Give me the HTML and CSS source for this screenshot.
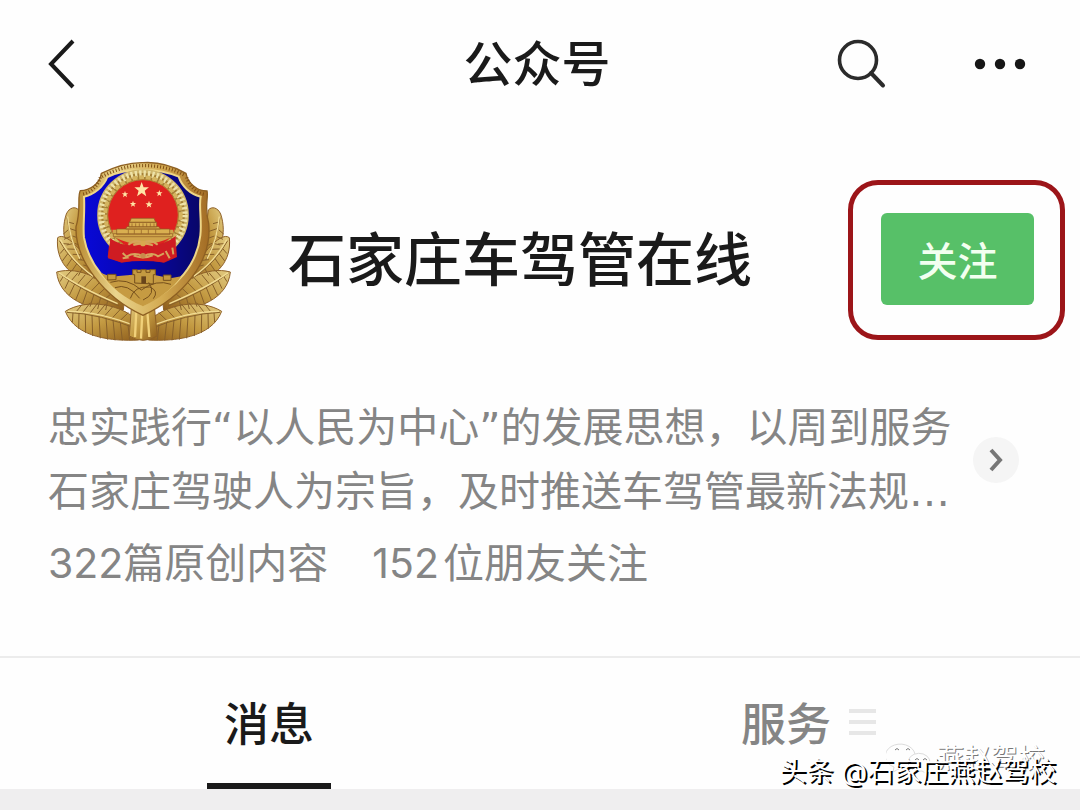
FILE: index.html
```html
<!DOCTYPE html>
<html lang="zh-CN">
<head>
<meta charset="utf-8">
<meta name="viewport" content="width=device-width, initial-scale=1">
<title>公众号</title>
<link rel="stylesheet" href="styles.css">
</head>
<body>
<header class="topbar">
  <button class="icon-btn back" type="button" aria-label="返回">
    <svg width="28" height="50" viewBox="0 0 28 50"><path d="M25 2 3 25 25 48" fill="none" stroke="#1a1a1a" stroke-width="4"/></svg>
  </button>
  <h1 class="topbar-title">公众号</h1>
  <div class="topbar-actions">
    <button class="icon-btn" type="button" aria-label="搜索">
      <svg width="50" height="50" viewBox="0 0 50 50" fill="none" stroke="#2b2b2b"><circle cx="21" cy="21" r="18.5" stroke-width="3.6"/><path d="M34 34 46 46.500" stroke-width="4" stroke-linecap="round"/></svg>
    </button>
    <button class="icon-btn" type="button" aria-label="更多">
      <svg width="52" height="12" viewBox="0 0 52 12" fill="#161616"><circle cx="6" cy="6" r="5.200"/><circle cx="26" cy="6" r="5.200"/><circle cx="46" cy="6" r="5.200"/></svg>
    </button>
  </div>
</header>

<main>
  <section class="profile">
    <svg class="avatar" viewBox="0 0 630 600" role="img" aria-label="警徽">
      <defs>
        <linearGradient id="gold" x1="0" y1="0" x2="1" y2="1">
          <stop offset="0" stop-color="#e3cc82"/><stop offset=".5" stop-color="#c39a42"/><stop offset="1" stop-color="#8d5c1b"/>
        </linearGradient>
        <linearGradient id="rim" x1="0" y1="0" x2="1" y2="0">
          <stop offset="0" stop-color="#b98b32"/><stop offset=".3" stop-color="#ead58d"/><stop offset=".65" stop-color="#d3aa51"/><stop offset="1" stop-color="#a26b24"/>
        </linearGradient>
        <linearGradient id="blue" x1="0" y1="0" x2="1" y2="0">
          <stop offset="0" stop-color="#0808d8"/><stop offset=".55" stop-color="#0806a5"/><stop offset="1" stop-color="#080667"/>
        </linearGradient>
        <path id="star" d="M0-20 5-6 19-6 8 3 12 17 0 9-12 17-8 3-19-6-5-6z"/>
        <g id="leaves">
          <path d="M122 345C82 310 58 255 79 192 88 172 106 168 116 180L132 315z"/>
          <path d="M162 398C88 382 46 332 53 263 80 240 152 330 176 388z"/>
          <path d="M250 480C143 486 57 443 50 366 119 347 204 390 252 462z"/>
          <path d="M296 570C221 574 107 565 76 484 139 445 245 459 302 520z"/>
          <g fill="none" stroke="#87602a" stroke-width="3">
            <path d="M81 202Q92 278 124 330M84 240 70 252M90 260 72 268M98 281 80 285M84 216 102 221M90 236 114 244M98 258 125 268M105 280 130 292"/>
            <path d="M58 272Q94 338 164 386M73 296 60 311M84 310 67 333M97 324 80 349M112 339 95 364M128 353 115 377M68 281 87 282M82 297 110 298M98 313 128 314M114 329 145 332M130 345 160 353"/>
            <path d="M55 369Q120 420 237 468M70 379 60 395M87 390 75 416M105 400 88 436M123 411 107 450M142 422 128 461M162 433 150 470M182 442 173 477M203 452 197 480M76 382 93 363M94 392 114 368M113 402 136 374M132 413 158 384M153 424 180 396M174 435 200 410M196 446 220 426"/>
            <path d="M81 487Q180 491 297 539M99 488 97 517M117 490 116 536M136 492 137 549M156 495 158 558M177 499 181 565M198 504 203 569M219 510 225 571M241 517 247 571M264 525 269 570M107 487 127 463M127 489 151 458M149 491 174 458M170 495 197 462M192 500 220 468M215 506 243 476M238 514 265 488"/>
          </g>
          <g fill="none" stroke="#f1dc94" stroke-width="4">
            <path d="M83 200Q91 277 120 326M61 269Q94 332 160 379M56 368Q120 413 233 461M84 484Q182 485 294 531"/>
          </g>
        </g>
      </defs>
      <g fill="url(#gold)" stroke="#8f6128" stroke-width="3" stroke-linejoin="round">
        <use href="#leaves"/>
        <use href="#leaves" transform="matrix(-1 0 0 1 621 0)"/>
        <path d="M275 460 268 558Q309 584 352 558L342 460z"/>
      </g>
      <path d="M289 480 285 561M307 485 303 566M322 485 328 561" stroke="#f1d17a" stroke-width="7" fill="none"/>
      <path d="M309 38C270 37 225 50 184 70 180 100 150 122 121 122 111 138 124 180 108 230 104 330 193 443 309 496 425 442 518 338 506 220 492 173 506 142 501 123 470 123 443 98 438 70 399 48 353 35 309 38z" fill="url(#rim)" stroke="#8e6022" stroke-width="4"/>
      <path d="M309 60C272 59 235 65 202 81 191 111 159 136 132 140 135 190 128 229 132 263 144 332 197 417 309 465 414 415 472 340 481 256 486 214 476 166 482 140 450 132 425 108 416 80 378 64 344 59 309 60z" fill="url(#blue)" stroke="#eed687" stroke-width="6"/>
      <path d="M186 80C225 58 270 46 309 47 355 46 402 57 434 76M181 82C175 109 148 130 124 133M440 82C448 110 470 129 496 133" fill="none" stroke="#805016" stroke-width="10" stroke-dasharray="3 6"/>
      <path d="M181 367Q207 383 236 378L278 374 278 359H347V376L391 385 424 379C397 418 354 449 309 469 255 446 211 411 181 367z" fill="#c69b42"/>
      <g fill="#c39a41" stroke="#76501c" stroke-width="3">
        <path d="M284 399V374H278V359H291V367H303V359H318V367H330V359H346V374H340V402zM203 390V373H228V389zM370 391V375H393V391z"/>
        <path d="M211 397Q260 381 304 420 349 387 393 403M225 413Q263 398 299 445M271 445Q283 407 329 411 358 423 340 446M326 397Q351 432 309 450" fill="none"/>
      </g>
      <path d="M304 379h14v21h-14z" fill="#68441b"/>
      <path d="M209 268 203 322 245 338Q309 323 372 338L411 321 407 267z" fill="#c91920"/>
      <circle cx="309" cy="195" r="129" fill="none" stroke="#cfb66b" stroke-width="17"/>
      <circle cx="309" cy="195" r="116" fill="none" stroke="#a58137" stroke-width="20"/>
      <circle cx="309" cy="195" r="124" fill="none" stroke="#eee2a7" stroke-width="20" stroke-dasharray="7 6"/>
      <circle cx="309" cy="195" r="113" fill="none" stroke="#d4b45f" stroke-width="12" stroke-dasharray="15 5"/>
      <circle cx="309" cy="195" r="106" fill="#df211f" stroke="#b98932" stroke-width="3"/>
      <path d="M217 239H400V259Q309 306 222 261z" fill="#cfa44b"/>
      <path d="M211 265Q240 291 309 286 374 288 407 258L408 321 371 337Q309 329 243 337L204 325z" fill="#cf1c22"/>
      <g fill="#ffe5a5"><use href="#star" transform="translate(305 119) scale(1.150)"/><use href="#star" transform="translate(255 133) scale(.5)"/><use href="#star" transform="translate(358 130) scale(.5)"/><use href="#star" transform="translate(279 162) scale(.5)"/><use href="#star" transform="translate(327 163) scale(.55)"/></g>
      <g fill="#d9af50" stroke="#8d5922" stroke-width="2">
        <path d="M274 205H342L347 217H269zM267 217H350V231H267zM261 230H356L361 237H257zM230 237H389V254H230zM220 251H398V260H220z"/>
        <path d="M276 220V230M287 220V230M298 220V230M309 220V230M320 220V230M331 220V230M342 220V230M265 239V251M283 239V251M304 239V251M325 239V251M347 239V251" fill="none"/>
      </g>
      <g fill="none" stroke="#d7a45b" stroke-width="6">
        <path d="M265 284Q287 265 309 280 331 265 353 284M280 285Q309 275 339 286M248 309 262 323 248 325M261 319Q284 305 309 319 339 305 354 319L372 310M281 317Q309 328 338 316M377 303 389 325M397 293 400 313"/>
      </g>
      <circle cx="309" cy="281" r="8" fill="#d9a84f"/><circle cx="309" cy="317" r="8" fill="#c98b4b"/>
    </svg>
    <h2 class="name">石家庄车驾管在线</h2>
    <div class="follow-frame"><button class="follow" type="button">关注</button></div>
  </section>

  <section class="about">
    <p class="desc">忠实践行“以人民为中心”的发展思想，以周到服务石家庄驾驶人为宗旨，及时推送车驾管最新法规…</p>
    <button class="more" type="button" aria-label="查看详情">
      <svg width="14" height="24" viewBox="0 0 14 24"><path d="M2 2 11 12 2 22" fill="none" stroke="#777" stroke-width="4"/></svg>
    </button>
  </section>
  <p class="stats"><span>322篇原创内容</span><span><span class="count">152</span>位朋友关注</span></p>

  <nav class="tabs">
    <button class="tab active" type="button"><span>消息</span></button>
    <button class="tab" type="button"><span>服务</span>
      <svg width="28" height="28" viewBox="0 0 28 28" fill="#e7e7e7"><path d="M0 1h27v4H0zM0 12h27v4H0zM0 23h27v4H0z"/></svg>
    </button>
  </nav>
</main>

<div class="mark mark-wechat">
  <svg width="46" height="38" viewBox="0 0 46 38" fill="#fefefe" stroke="#dcdcdc" stroke-width="1"><path d="M8 27A15 12 0 1 1 29 14M8 27 7 32 13 29"/><path d="M44 23A11 9 0 1 0 36 31L41 34 40 29Q44 27 44 23z"/><path d="M9 10q2-3 4 0M20 10q2-3 4 0M29 20q2-3 4 0M37 20q2-3 4 0" fill="none" stroke="#777"/></svg>
  <span>燕赵驾校</span>
</div>
<div class="mark mark-toutiao">头条 @石家庄燕赵驾校</div>
</body>
</html>
```
FILE: styles.css
```css
* { box-sizing: border-box; }

body {
  margin: 0;
  position: relative;
  min-height: 100vh;
  overflow-x: hidden;
  background: #efeeef;
  color: #1a1a1a;
  font-family: Inter, "Noto Sans CJK SC", sans-serif;
}

h1, h2, p { margin: 0; }

button {
  border: 0;
  padding: 0;
  background: none;
  color: inherit;
  font: inherit;
}

svg { display: block; flex: none; }

.topbar {
  display: grid;
  grid-template-columns: 1fr auto 1fr;
  align-items: center;
  height: 128px;
  padding: 0 54px 0 48px;
  background: #fefefe;
}

.icon-btn { display: flex; }

.topbar-title {
  padding-top: 2px;
  font-size: 49px;
  font-weight: 500;
  line-height: 64px;
}

.topbar-actions {
  display: flex;
  align-items: center;
  justify-content: flex-end;
  gap: 87px;
}

main { background: #fefefe; }

.profile {
  display: flex;
  align-items: flex-end;
  padding: 22px 15px 0 40px;
}

.avatar { width: 210px; height: 200px; }

.name {
  flex: 1;
  margin-left: 38px;
  padding-bottom: 50px;
  font-size: 58px;
  font-weight: 500;
  line-height: 80px;
}

.follow-frame {
  margin-bottom: 10px;
  padding: 28px 26px 30px 28px;
  border: 5px solid #9c1519;
  border-radius: 30px;
}

.follow {
  display: block;
  width: 153px;
  height: 92px;
  border-radius: 6px;
  background: #57c068;
  color: #f2fff0;
  font-size: 40px;
  font-weight: 500;
}

.about {
  display: flex;
  align-items: center;
  justify-content: space-between;
  padding: 46px 61px 0 48px;
}

.desc, .stats {
  color: #858585;
  font-size: 41px;
  line-height: 64px;
}

.desc {
  flex: 1;
  font-family: "DejaVu Sans", "Noto Sans CJK SC", sans-serif;
}

.more {
  display: grid;
  place-items: center;
  width: 46px;
  height: 46px;
  margin-left: 8px;
  border-radius: 50%;
  background: #f5f5f5;
}

.stats {
  display: flex;
  gap: 44px;
  padding: 7px 48px 61px;
}

.count { margin-right: 4px; }

.tabs {
  display: grid;
  grid-template-columns: 1fr 1fr;
  border-top: 2px solid #ececec;
}

.tab {
  position: relative;
  display: flex;
  align-items: center;
  justify-content: center;
  gap: 18px;
  height: 131px;
  padding: 0 2px 4px 0;
  color: #858585;
  font-size: 45px;
  font-weight: 500;
}

.active { color: #1a1a1a; }

.active::after {
  content: "";
  position: absolute;
  bottom: 0;
  width: 124px;
  height: 6px;
  background: #1a1a1a;
}

.mark {
  position: absolute;
  color: #fff;
  font-size: 27px;
  line-height: 36px;
  white-space: nowrap;
  pointer-events: none;
}

.mark-toutiao {
  right: 24px;
  top: 754px;
  text-shadow: 2px 2px 0 #000;
}

.mark-wechat {
  right: 35px;
  top: 740px;
  display: flex;
  align-items: center;
  gap: 5px;
  text-shadow: 1px 1px 0 #777;
}
```
